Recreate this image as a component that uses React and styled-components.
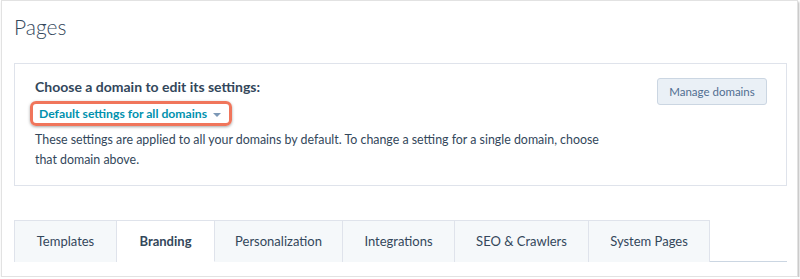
import React from 'react'
import styled, { createGlobalStyle } from 'styled-components'

const GlobalStyle = createGlobalStyle`
  html, body {
    margin: 0;
    padding: 0;
    background: #fff;
  }
  body {
    font-family: Lato, "Liberation Sans", sans-serif;
    color: #33475b;
  }
`;

const Frame = styled.div`
  box-sizing: border-box;
  margin-left: 1px;
  width: 797px;
  height: 277px;
  border: 1px solid #e2e2e2;
  box-shadow: 1px 2px 2px rgba(0, 0, 0, 0.3);
  background: #fff;
  padding: 0 10px 0 12px;
  overflow: hidden;
`;

const Title = styled.h1`
  margin: 13px 0 0 0;
  font-size: 21px;
  line-height: 26px;
  font-weight: 300;
  color: #33475b;
`;

const Card = styled.section`
  box-sizing: border-box;
  margin-top: 23px;
  height: 123px;
  border: 1px solid #dfe3eb;
  padding: 13px 19px 0 20px;
  display: flex;
  justify-content: space-between;
  align-items: flex-start;
`;

const CardBody = styled.div`
  display: flex;
  flex-direction: column;
  align-items: flex-start;
`;

const Heading = styled.h2`
  margin: 0;
  font-size: 14px;
  line-height: 20px;
  font-weight: 700;
  color: #33475b;
`;

const Highlight = styled.div`
  margin: 4px 0 0 -5px;
  display: inline-flex;
  align-items: center;
  gap: 6px;
  height: 25px;
  box-sizing: border-box;
  padding: 0 8px 0 6px;
  border: 3px solid #f0755b;
  border-radius: 6px;
  box-shadow: 0 1px 3px rgba(0, 0, 0, 0.35);
`;

const DomainLink = styled.span`
  font-size: 12.2px;
  font-weight: 700;
  color: #0091ae;
`;

const Caret = styled.span`
  width: 0;
  height: 0;
  border-left: 4px solid transparent;
  border-right: 4px solid transparent;
  border-top: 4px solid #7c98b6;
  margin-top: 2px;
`;

const Description = styled.p`
  margin: 4px 0 0 0;
  max-width: 580px;
  font-size: 12.4px;
  line-height: 20px;
  color: #33475b;
`;

const Button = styled.button`
  margin-top: 1px;
  width: 110px;
  height: 27px;
  padding: 0;
  background: #eaf0f6;
  border: 1px solid #cbd6e2;
  border-radius: 3px;
  color: #506e91;
  font-family: Lato, "Liberation Sans", sans-serif;
  font-size: 11.5px;
`;

const TabBar = styled.nav`
  margin-top: 34px;
  display: flex;
  border-bottom: 1px solid #cbd6e2;
  height: 42px;
  box-sizing: border-box;
`;

const Tab = styled.div`
  box-sizing: border-box;
  width: ${p => p.$w}px;
  height: 42px;
  display: flex;
  align-items: center;
  justify-content: center;
  font-size: 13px;
  color: #33475b;
  font-weight: ${p => (p.$active ? 700 : 400)};
  background: ${p => (p.$active ? '#fff' : '#f5f8fa')};
  border: 1px solid #dfe3eb;
  border-left: ${p => (p.$first ? '1px solid #dfe3eb' : 'none')};
  border-bottom: ${p => (p.$active ? '1px solid #fff' : 'none')};
  margin-bottom: ${p => (p.$active ? '-1px' : '0')};
  padding-bottom: 1px;
`;

const tabs = [
  { label: 'Templates', w: 103 },
  { label: 'Branding', w: 98, active: true },
  { label: 'Personalization', w: 128 },
  { label: 'Integrations', w: 112 },
  { label: 'SEO & Crawlers', w: 134 },
  { label: 'System Pages', w: 121 },
];

const App = () => {
  return (
    <>
      <GlobalStyle />
      <Frame>
        <Title>Pages</Title>
        <Card>
          <CardBody>
            <Heading>Choose a domain to edit its settings:</Heading>
            <Highlight>
              <DomainLink>Default settings for all domains</DomainLink>
              <Caret />
            </Highlight>
            <Description>
              These settings are applied to all your domains by default. To change a setting for a single domain, choose that domain above.
            </Description>
          </CardBody>
          <Button>Manage domains</Button>
        </Card>
        <TabBar>
          {tabs.map((t, i) => (
            <Tab key={t.label} $w={t.w} $active={t.active} $first={i === 0}>
              {t.label}
            </Tab>
          ))}
        </TabBar>
      </Frame>
    </>
  )
}

export default App
